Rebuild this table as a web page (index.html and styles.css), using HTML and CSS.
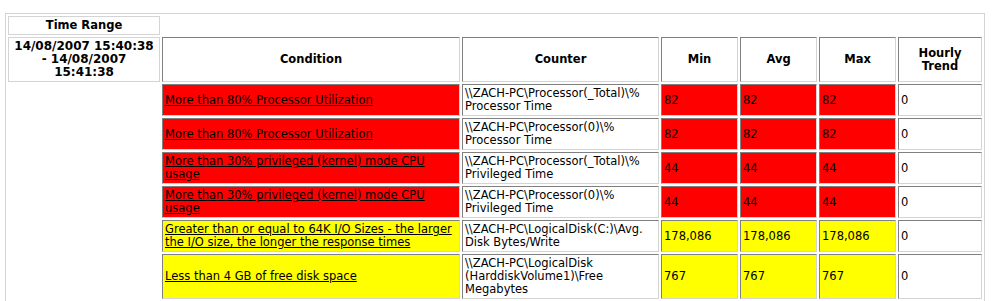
FILE: index.html
```html
<!DOCTYPE html>
<html>
<head>
<meta charset="utf-8">
<link rel="stylesheet" href="styles.css">
</head>
<body>
<table class="report">
  <colgroup>
    <col class="c-time">
    <col class="c-cond">
    <col class="c-counter">
    <col class="c-num">
    <col class="c-num">
    <col class="c-num">
    <col class="c-trend">
  </colgroup>
  <tr>
    <th class="range">Time Range</th>
    <td class="blank" colspan="6"></td>
  </tr>
  <tr>
    <td class="range date">14/08/2007 15:40:38 - 14/08/2007 15:41:38</td>
    <th class="cell">Condition</th>
    <th class="cell">Counter</th>
    <th class="cell">Min</th>
    <th class="cell">Avg</th>
    <th class="cell">Max</th>
    <th class="cell">Hourly Trend</th>
  </tr>
  <tr>
    <td class="blank"></td>
    <td class="cell red"><a href="#">More than 80% Processor Utilization</a></td>
    <td class="cell">\\ZACH-PC\Processor(_Total)\% Processor Time</td>
    <td class="cell red">82</td>
    <td class="cell red">82</td>
    <td class="cell red">82</td>
    <td class="cell">0</td>
  </tr>
  <tr>
    <td class="blank"></td>
    <td class="cell red"><a href="#">More than 80% Processor Utilization</a></td>
    <td class="cell">\\ZACH-PC\Processor(0)\% Processor Time</td>
    <td class="cell red">82</td>
    <td class="cell red">82</td>
    <td class="cell red">82</td>
    <td class="cell">0</td>
  </tr>
  <tr>
    <td class="blank"></td>
    <td class="cell red"><a href="#">More than 30% privileged (kernel) mode CPU usage</a></td>
    <td class="cell">\\ZACH-PC\Processor(_Total)\% Privileged Time</td>
    <td class="cell red">44</td>
    <td class="cell red">44</td>
    <td class="cell red">44</td>
    <td class="cell">0</td>
  </tr>
  <tr>
    <td class="blank"></td>
    <td class="cell red"><a href="#">More than 30% privileged (kernel) mode CPU usage</a></td>
    <td class="cell">\\ZACH-PC\Processor(0)\% Privileged Time</td>
    <td class="cell red">44</td>
    <td class="cell red">44</td>
    <td class="cell red">44</td>
    <td class="cell">0</td>
  </tr>
  <tr>
    <td class="blank"></td>
    <td class="cell yellow"><a href="#">Greater than or equal to 64K I/O Sizes - the larger the I/O size, the longer the response times</a></td>
    <td class="cell">\\ZACH-PC\LogicalDisk(C:)\Avg. Disk Bytes/Write</td>
    <td class="cell yellow">178,086</td>
    <td class="cell yellow">178,086</td>
    <td class="cell yellow">178,086</td>
    <td class="cell">0</td>
  </tr>
  <tr>
    <td class="blank"></td>
    <td class="cell yellow"><a href="#">Less than 4 GB of free disk space</a></td>
    <td class="cell">\\ZACH-PC\LogicalDisk (HarddiskVolume1)\Free Megabytes</td>
    <td class="cell yellow">767</td>
    <td class="cell yellow">767</td>
    <td class="cell yellow">767</td>
    <td class="cell">0</td>
  </tr>
</table>
</body>
</html>
```
FILE: styles.css
```css
html, body {
  background: #ffffff;
}
body {
  margin: 13px 0 0 5px;
  font-family: "DejaVu Sans", Verdana, sans-serif;
  font-size: 11.5px;
  line-height: 13px;
  color: #000000;
}
.report {
  table-layout: fixed;
  width: 980px;
  border-collapse: separate;
  border-spacing: 2px;
  border: 1px solid #d4d4d4;
}
.c-time { width: 152px; }
.c-cond { width: 298px; }
.c-counter { width: 197px; }
.c-num { width: 77px; }
.c-trend { width: 84px; }
.report td, .report th {
  padding: 2px;
  vertical-align: middle;
}
.report th {
  font-weight: bold;
  text-align: center;
}
.range {
  border: 1px solid #d4d4d4;
}
.date {
  font-weight: bold;
  font-size: 12px;
  text-align: center;
}
.blank {
  border: none;
}
.cell {
  border: 1px solid;
  border-color: #808080 #d4d4d4 #d4d4d4 #808080;
  text-align: left;
}
.red { background: #ff0000; }
.yellow { background: #ffff00; }
.cell a {
  color: #000000;
  text-decoration: underline;
}
```
